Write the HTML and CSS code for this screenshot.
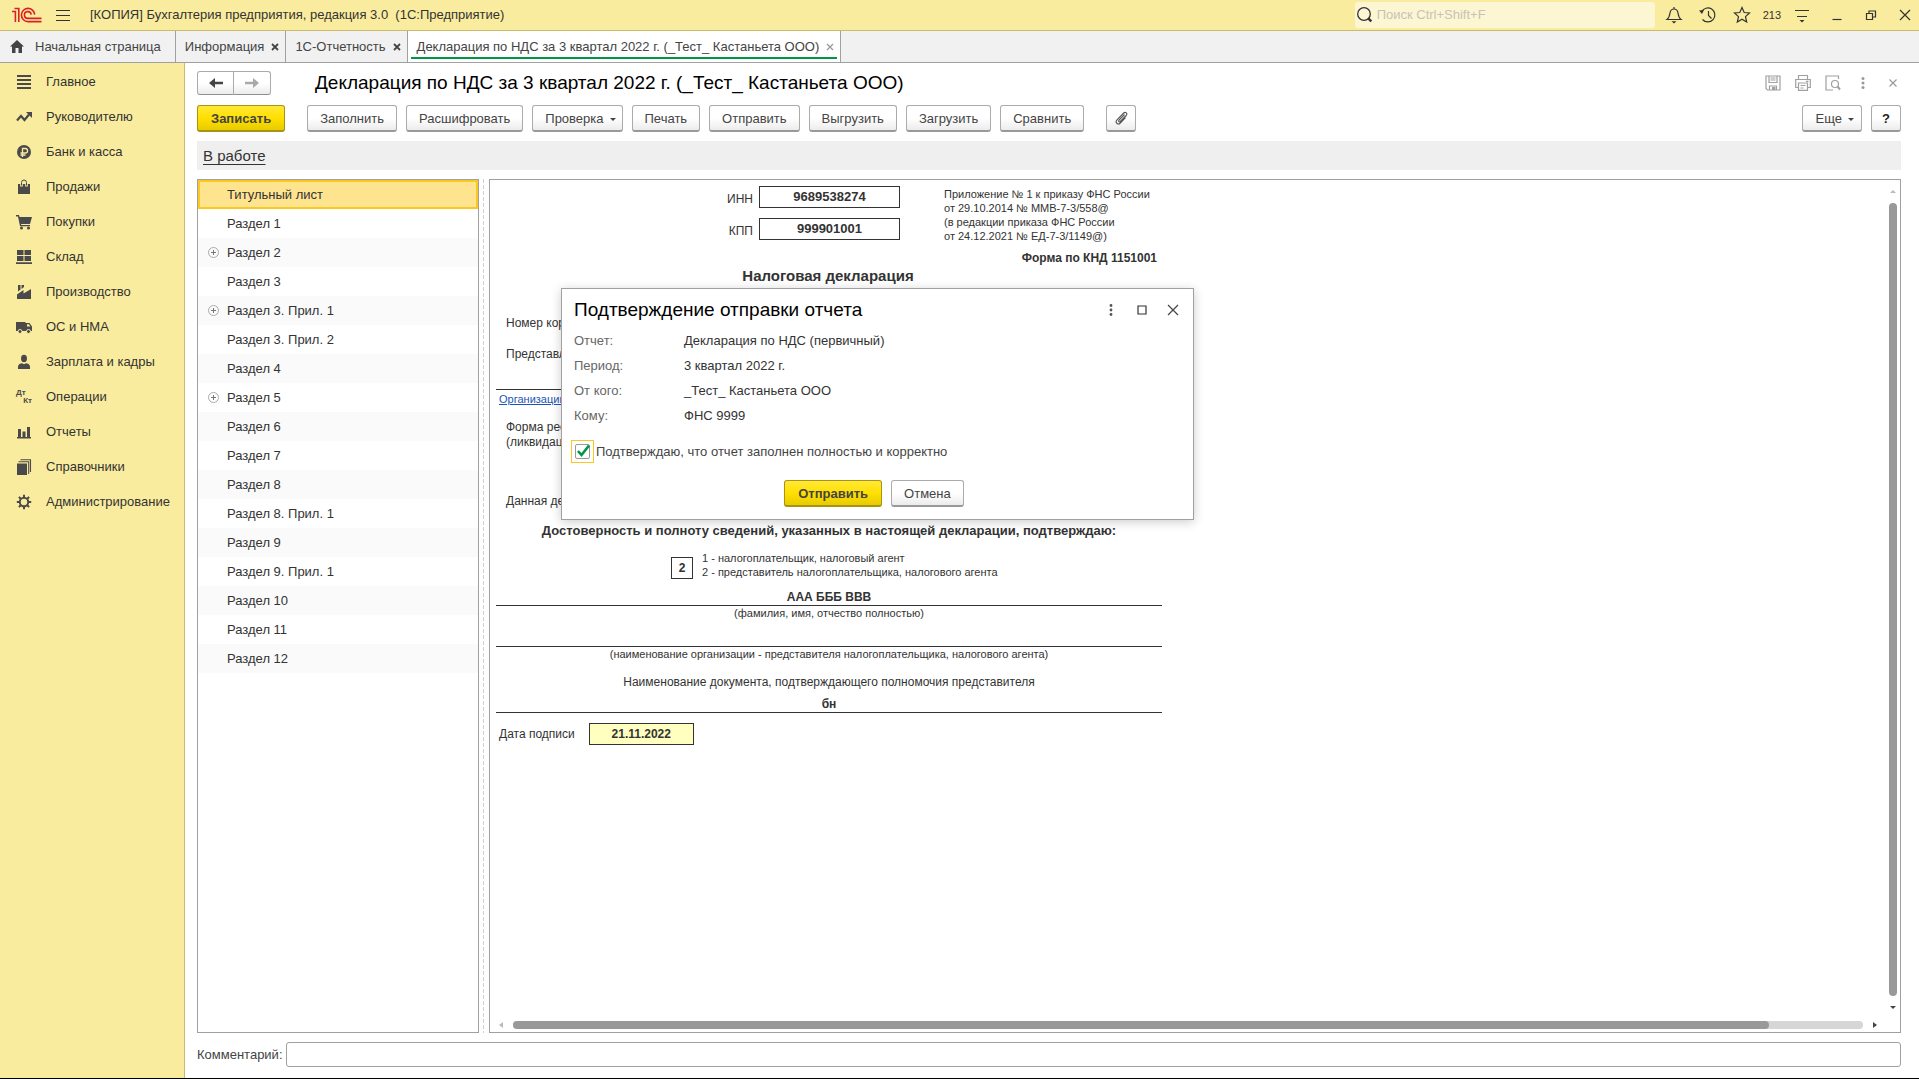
FILE: index.html
```html
<!DOCTYPE html>
<html lang="ru">
<head>
<meta charset="utf-8">
<title>[КОПИЯ] Бухгалтерия предприятия, редакция 3.0</title>
<link rel="stylesheet" href="styles.css">
</head>
<body>
<header class="titlebar">
  <svg class="logo" width="30" height="16" viewBox="0 0 30 16" fill="none" stroke="#dc1f26" stroke-width="1.6"><path d="M0 4.5H3.4V15M2.5 1.5H6.8V15M22.6 7.6A6.6 6.6 0 1 0 16 14.6H29.5M19.2 7.6A3.4 3.4 0 1 0 16 11.4H29.5"/></svg>
  <button class="icon-btn menu-btn" aria-label="Меню"><svg width="14" height="13" viewBox="0 0 14 13" stroke="#333" stroke-width="1"><path d="M0 1.5h14M0 6.5h14M0 11.5h14"/></svg></button>
  <span class="app-title">[КОПИЯ] Бухгалтерия предприятия, редакция 3.0&nbsp; (1С:Предприятие)</span>
  <label class="search">
    <svg width="18" height="18" viewBox="0 0 18 18" fill="none" stroke="#333"><circle cx="8" cy="8" r="6.3" stroke-width="1.3"/><path d="M12.3 12.3l3 3" stroke-width="2.4"/></svg>
    <input type="search" placeholder="Поиск Ctrl+Shift+F" aria-label="Поиск">
  </label>
  <div class="tools">
    <button class="icon-btn" aria-label="Уведомления"><svg width="18" height="18" viewBox="0 0 18 18" fill="none" stroke="#333" stroke-width="1.2"><path d="M2 13.5h14c-2-1.500-2.500-3-3-6.500C12.600 4.300 11 3 9 3S5.400 4.300 5 7c-.5 3.500-1 5-3 6.500zM9 1v2"/><path d="M6.500 15.300h5L9 17.500z" fill="#333" stroke="none"/></svg></button>
    <button class="icon-btn" aria-label="История"><svg width="18" height="18" viewBox="0 0 18 18" fill="none" stroke="#333" stroke-width="1.2"><path d="M2.500 6A7 7 0 1 1 3.500 13.500M9.500 5v4.500l3 3"/><path d="M0 4.500l5-.5-2 4z" fill="#333" stroke="none"/></svg></button>
    <button class="icon-btn" aria-label="Избранное"><svg width="18" height="18" viewBox="0 0 18 18" fill="none" stroke="#333" stroke-width="1.2"><path d="M9 1.500l2.200 5 5.300.5-4 3.600 1.200 5.400L9 13.200 4.300 16l1.200-5.400-4-3.600 5.300-.5z"/></svg></button>
    <span class="count">213</span>
    <button class="icon-btn" aria-label="Сервис"><svg width="18" height="18" viewBox="0 0 18 18" stroke="#333" stroke-width="1.2"><path d="M2 4.500h14M4 10.500h10"/><path d="M6.500 14h5L9 16.500z" fill="#333" stroke="none"/></svg></button>
    <button class="icon-btn win" aria-label="Свернуть"><svg width="12" height="12" viewBox="0 0 12 12" stroke="#333" stroke-width="1.2"><path d="M1.500 10.500h9"/></svg></button>
    <button class="icon-btn win" aria-label="Восстановить"><svg width="12" height="12" viewBox="0 0 12 12" fill="none" stroke="#333" stroke-width="1.2"><path d="M1.500 4.500h6v6h-6zM4 4.500v-2.500h6.500v6H7.500"/></svg></button>
    <button class="icon-btn win" aria-label="Закрыть"><svg width="12" height="12" viewBox="0 0 12 12" stroke="#333" stroke-width="1.200"><path d="M1 1l10 10M11 1L1 11"/></svg></button>
  </div>
</header>

<nav class="tabs" aria-label="Открытые окна">
  <a class="tab home" href="#"><svg width="14" height="13" viewBox="0 0 14 13" fill="#444"><path d="M7 0l7 6.500h-2V13H8.500V8h-3v5H2V6.500H0z"/></svg>Начальная страница</a>
  <a class="tab" href="#">Информация<svg width="8" height="8" viewBox="0 0 8 8" stroke="#444" stroke-width="1.800"><path d="M1 1l6 6M7 1L1 7"/></svg></a>
  <a class="tab" href="#">1С-Отчетность<svg width="8" height="8" viewBox="0 0 8 8" stroke="#444" stroke-width="1.800"><path d="M1 1l6 6M7 1L1 7"/></svg></a>
  <a class="tab active" href="#">Декларация по НДС за 3 квартал 2022 г. (_Тест_ Кастаньета ООО)<svg width="8" height="8" viewBox="0 0 8 8" stroke="#999" stroke-width="1.300"><path d="M1 1l6 6M7 1L1 7"/></svg></a>
</nav>

<div class="workspace">
  <nav class="sections" aria-label="Разделы">
    <a href="#"><svg viewBox="0 0 16 16"><path d="M1 1h14v2H1zM1 5h14v2H1zM1 9h14v2H1zM1 13h14v2H1z"/></svg>Главное</a>
    <a href="#"><svg viewBox="0 0 16 16"><path d="M1 11.500l4-4.500 3.500 4L13 5.500" fill="none" stroke="#4a4a4a" stroke-width="2.200"/><path d="M10 3h6v6z"/></svg>Руководителю</a>
    <a href="#"><svg viewBox="0 0 16 16"><circle cx="8" cy="8" r="7"/><path d="M6.500 13V4.500h2.800a2.200 2.200 0 0 1 0 4.500H4.500M4.500 11h5" fill="none" stroke="#faec9e" stroke-width="1.300"/></svg>Банк и касса</a>
    <a href="#"><svg viewBox="0 0 16 16"><path d="M2 5h12v10H2z"/><path d="M5.500 7.500V3.500a2.500 2.500 0 0 1 5 0v4" fill="none" stroke="#faec9e" stroke-width="2.600"/><path d="M5.500 6.500v-3a2.500 2.500 0 0 1 5 0v3" fill="none" stroke="#4a4a4a" stroke-width="1"/></svg>Продажи</a>
    <a href="#"><svg viewBox="0 0 16 16"><path d="M0 1h3l.6 2H16l-2 7H5l.3 1H14v1.300H4L2 2.500H0z"/><circle cx="5.500" cy="14" r="1.500"/><circle cx="12.500" cy="14" r="1.500"/></svg>Покупки</a>
    <a href="#"><svg viewBox="0 0 16 16"><path d="M1 1h6.500v5H1zM8.500 1H15v5H8.500zM1 7h6.500v5H1zM8.500 7H15v5H8.500zM0 13.200h16V15H0z"/></svg>Склад</a>
    <a href="#"><svg viewBox="0 0 16 16"><path d="M1 15v-4.500L7.500 6v3.500L15 5v10z"/><path d="M2 1h2.500v4.500L2 7.500zM5.500 1H8v2L5.500 5z"/></svg>Производство</a>
    <a href="#"><svg viewBox="0 0 16 16"><path d="M0 3h9.500v9H0zM9.500 4h4L16 7.500V12H9.500z"/><path d="M11 5.200h2l1.300 2.300H11z" fill="#faec9e"/><circle cx="4" cy="12.500" r="2" stroke="#faec9e"/><circle cx="12.500" cy="12.500" r="2" stroke="#faec9e"/></svg>ОС и НМА</a>
    <a href="#"><svg viewBox="0 0 16 16"><ellipse cx="8" cy="4.500" rx="3" ry="3.700"/><path d="M2 15v-2.500C2 10.500 4 9.500 6 9.300l2 1 2-1c2 .2 4 1.200 4 3.200V15z"/></svg>Зарплата и кадры</a>
    <a href="#"><span class="dtkt" aria-hidden="true"><b>Дт</b><b>Кт</b></span>Операции</a>
    <a href="#"><svg viewBox="0 0 16 16"><path d="M1 13h14v1.500H1zM2 5h3v8H2zM6.500 7.500h3V13h-3zM11 3h3v10h-3z"/></svg>Отчеты</a>
    <a href="#"><svg viewBox="0 0 16 16"><path d="M1 4.500h10V16H1z"/><path d="M2.500 2.800h10.200V15M4.500 .8h10V13" fill="none" stroke="#4a4a4a" stroke-width="1.100"/></svg>Справочники</a>
    <a href="#"><svg viewBox="0 0 16 16" stroke="#4a4a4a"><circle cx="8" cy="8" r="4.200" fill="#faec9e" stroke-width="2"/><path d="M8 .8v2.500M8 12.700v2.500M.8 8h2.500M12.700 8h2.500M2.900 2.900l1.800 1.800M11.300 11.300l1.800 1.800M2.900 13.100l1.800-1.800M11.300 4.700l1.800-1.800" stroke-width="2"/></svg>Администрирование</a>
  </nav>

  <main class="page">
    <div class="page-head">
      <div class="history">
        <button aria-label="Назад"><svg width="14" height="12" viewBox="0 0 14 12" fill="#444"><path d="M0 6l6-5v3.800h8v2.400H6V11z"/></svg></button>
        <button aria-label="Вперед"><svg width="14" height="12" viewBox="0 0 14 12" fill="#aaa"><path d="M14 6L8 1v3.800H0v2.400h8V11z"/></svg></button>
      </div>
      <h1>Декларация по НДС за 3 квартал 2022 г. (_Тест_ Кастаньета ООО)</h1>
      <div class="page-tools">
        <button class="icon-btn" aria-label="Сохранить"><svg width="16" height="16" viewBox="0 0 16 16" fill="none" stroke="#a0a0a0" stroke-width="1.200"><path d="M1 1h14v14H2.500L1 13.500zM4 1v6.500h8V1M5.500 3h5M5.500 5h5M4.500 15v-4h7v4"/><path d="M7 12h3.500v3H7z" fill="#a0a0a0" stroke="none"/></svg></button>
        <button class="icon-btn" aria-label="Печать"><svg width="16" height="16" viewBox="0 0 16 16" fill="none" stroke="#a0a0a0" stroke-width="1.200"><path d="M3.500 4.500v-4h9v4M3.500 12.500H.7v-8h14.600v8h-2.800M3.500 8h9v7.400h-9zM5.500 10.500h5M5.500 13h3M11 6.300h2.500"/></svg></button>
        <button class="icon-btn" aria-label="Просмотр"><svg width="16" height="16" viewBox="0 0 16 16" fill="none" stroke="#a0a0a0" stroke-width="1.200"><path d="M8 15H1V1h12.500v3"/><circle cx="10" cy="9" r="3.500"/><path d="M12.500 11.500l2.500 3" stroke-width="2"/></svg></button>
        <button class="icon-btn" aria-label="Дополнительно"><svg width="16" height="16" viewBox="0 0 16 16" fill="#999"><circle cx="8" cy="3.500" r="1.500"/><circle cx="8" cy="8" r="1.500"/><circle cx="8" cy="12.500" r="1.500"/></svg></button>
        <button class="icon-btn" aria-label="Закрыть форму"><svg width="16" height="16" viewBox="0 0 16 16" stroke="#999" stroke-width="1.200"><path d="M4.500 4.500l7 7M11.500 4.500l-7 7"/></svg></button>
      </div>
    </div>

    <div class="commands">
      <button class="btn primary save">Записать</button>
      <button class="btn">Заполнить</button>
      <button class="btn">Расшифровать</button>
      <button class="btn drop">Проверка</button>
      <button class="btn">Печать</button>
      <button class="btn">Отправить</button>
      <button class="btn">Выгрузить</button>
      <button class="btn">Загрузить</button>
      <button class="btn">Сравнить</button>
      <button class="btn clip" aria-label="Файлы"><svg width="14" height="14" viewBox="0 0 14 14" fill="none" stroke="#555" stroke-width="1.100"><path d="M10.500 3.500L5 9.200c-.9 1 .4 2.200 1.300 1.300l5.900-6c1.700-1.900-.7-4.200-2.500-2.500L3 8.800c-2.400 2.600.9 5.600 3.300 3.200L11.500 6.500"/></svg></button>
      <button class="btn drop more">Еще</button>
      <button class="btn help">?</button>
    </div>

    <div class="status"><a href="#">В работе</a></div>

    <div class="panes">
      <ul class="tree">
        <li class="selected">Титульный лист</li>
        <li>Раздел 1</li>
        <li class="group">Раздел 2</li>
        <li>Раздел 3</li>
        <li class="group">Раздел 3. Прил. 1</li>
        <li>Раздел 3. Прил. 2</li>
        <li>Раздел 4</li>
        <li class="group">Раздел 5</li>
        <li>Раздел 6</li>
        <li>Раздел 7</li>
        <li>Раздел 8</li>
        <li>Раздел 8. Прил. 1</li>
        <li>Раздел 9</li>
        <li>Раздел 9. Прил. 1</li>
        <li>Раздел 10</li>
        <li>Раздел 11</li>
        <li>Раздел 12</li>
      </ul>
      <div class="splitter"></div>
      <section class="report">
        <div class="sheet">
          <div class="sheet-head">
            <div class="codes">
              <span>ИНН</span><b class="box">9689538274</b>
              <span>КПП</span><b class="box">999901001</b>
            </div>
            <p class="small">Приложение № 1 к приказу ФНС России<br>от 29.10.2014 № ММВ-7-3/558@<br>(в редакции приказа ФНС России<br>от 24.12.2021 № ЕД-7-3/1149@)</p>
          </div>
          <p class="knd">Форма по КНД 1151001</p>
          <h2>Налоговая декларация</h2>
          <div class="covered">
            <p>Номер кор.</p>
            <p class="office">Представл.</p>
            <p class="org small"><a href="#">Организации</a></p>
            <p class="reorg">Форма реорг.<br>(ликвидац.)</p>
            <p class="given">Данная декл.</p>
          </div>
          <h3>Достоверность и полноту сведений, указанных в настоящей декларации, подтверждаю:</h3>
          <div class="signer">
            <b class="box">2</b>
            <p class="small">1 - налогоплательщик, налоговый агент<br>2 - представитель налогоплательщика, налогового агента</p>
          </div>
          <p class="line">ААА БББ ВВВ</p>
          <p class="note small">(фамилия, имя, отчество полностью)</p>
          <p class="line"></p>
          <p class="note small">(наименование организации - представителя налогоплательщика, налогового агента)</p>
          <p class="doc-name">Наименование документа, подтверждающего полномочия представителя</p>
          <p class="line">бн</p>
          <div class="date"><span>Дата подписи</span><b class="box filled">21.11.2022</b></div>
        </div>
        <div class="vscroll"><i class="arrow up"></i><i class="thumb"></i><i class="arrow down"></i></div>
        <div class="hscroll"><i class="arrow left"></i><div class="track"><i class="thumb"></i></div><i class="arrow right"></i></div>
      </section>
    </div>

    <label class="comment">Комментарий:<input type="text"></label>

    <div class="dialog" role="dialog" aria-labelledby="dialog-title">
      <div class="dialog-head">
        <h2 id="dialog-title">Подтверждение отправки отчета</h2>
        <button class="icon-btn" aria-label="Меню окна"><svg width="16" height="16" viewBox="0 0 16 16" fill="#555"><circle cx="8" cy="3.500" r="1.400"/><circle cx="8" cy="8" r="1.400"/><circle cx="8" cy="12.500" r="1.400"/></svg></button>
        <button class="icon-btn" aria-label="Развернуть"><svg width="16" height="16" viewBox="0 0 16 16" fill="none" stroke="#333" stroke-width="1.200"><path d="M4 4h8v8H4z"/></svg></button>
        <button class="icon-btn" aria-label="Закрыть окно"><svg width="16" height="16" viewBox="0 0 16 16" stroke="#444" stroke-width="1.200"><path d="M3 3l10 10M13 3L3 13"/></svg></button>
      </div>
      <dl>
        <dt>Отчет:</dt><dd>Декларация по НДС (первичный)</dd>
        <dt>Период:</dt><dd>3 квартал 2022 г.</dd>
        <dt>От кого:</dt><dd>_Тест_ Кастаньета ООО</dd>
        <dt>Кому:</dt><dd>ФНС 9999</dd>
      </dl>
      <label class="confirm">
        <span class="focus"><input type="checkbox" checked><svg width="16" height="16" viewBox="0 0 16 16" fill="none" stroke="#009646" stroke-width="2.600"><path d="M3 7l3.500 4L14 1.500"/></svg></span>
        Подтверждаю, что отчет заполнен полностью и корректно
      </label>
      <div class="dialog-actions">
        <button class="btn primary">Отправить</button>
        <button class="btn">Отмена</button>
      </div>
    </div>
  </main>
</div>
</body>
</html>
```
FILE: styles.css
```css
* { box-sizing: border-box; }
body {
  margin: 0;
  min-height: 100vh;
  display: flex;
  flex-direction: column;
  border-bottom: 1px solid #000;
  background: #fff;
  color: #333;
  font: 13px/16px "Liberation Sans", Arial, sans-serif;
}
p, h1, h2, h3, ul, dl, dd { margin: 0; padding: 0; }
button, input { font: inherit; color: inherit; }
svg { display: block; flex: none; }
a { color: inherit; }

.icon-btn {
  display: flex;
  padding: 0;
  border: 0;
  background: none;
}

/* Title bar */
.titlebar {
  display: flex;
  align-items: center;
  height: 31px;
  padding: 0 5px 0 12px;
  background: #faec9e;
  border-bottom: 1px solid #c9bb6c;
}
.menu-btn { margin: 0 20px 0 14px; }
.search {
  display: flex;
  align-items: center;
  gap: 3px;
  width: 300px;
  height: 26px;
  margin-left: auto;
  padding-left: 1px;
  border-radius: 3px;
  background: #fdf6d3;
}
.search input {
  flex: 1;
  min-width: 0;
  padding: 0;
  border: 0;
  outline: 0;
  background: none;
}
.search input::placeholder { color: #c6c3b8; opacity: 1; }
.tools { display: flex; align-items: center; gap: 16px; margin-left: 10px; }
.count { margin: 0 -4px; font-size: 11px; }
.win { margin: 0 3px 0 4px; }
.win + .win { margin-left: 3px; }

/* Window tabs */
.tabs {
  display: flex;
  height: 32px;
  background: #f1f1f1;
  border-bottom: 1px solid #a0a0a0;
}
.tab {
  display: flex;
  align-items: center;
  gap: 7px;
  padding: 0 6px 0 9px;
  border-right: 1px solid #a0a0a0;
  color: #444;
  text-decoration: none;
}
.tab.home { gap: 11px; padding: 0 14px 0 10px; }
.tab.active {
  background:
    linear-gradient(#009646, #009646) center 26px / calc(100% - 6px) 2px no-repeat,
    #fff;
}

/* Section panel */
.workspace { flex: 1; display: flex; }
.sections {
  flex: none;
  width: 185px;
  padding-top: 1px;
  background: #faec9e;
  border-right: 1px solid #c9bb6c;
}
.sections a {
  display: flex;
  align-items: center;
  gap: 14px;
  height: 35px;
  padding-left: 16px;
  color: #333;
  text-decoration: none;
}
.sections svg { width: 16px; height: 16px; fill: #4a4a4a; }
.dtkt { width: 16px; font-size: 8px; line-height: 8px; color: #4a4a4a; }
.dtkt b { display: block; }
.dtkt b + b { text-align: right; }

/* Form */
.page {
  position: relative;
  flex: 1;
  min-width: 0;
  display: flex;
  flex-direction: column;
  padding: 8px 18px 11px 12px;
}
.page-head { display: flex; align-items: center; height: 24px; }
.history { display: flex; }
.history button {
  display: flex;
  align-items: center;
  justify-content: center;
  width: 37px;
  height: 24px;
  padding: 0;
  border: 1px solid #ababab;
  border-bottom-color: #8f8f8f;
  border-radius: 3px 0 0 3px;
  background: linear-gradient(#fff 50%, #ececec);
}
.history button + button { border-left: 0; border-radius: 0 3px 3px 0; }
h1 {
  margin-left: 44px;
  font-size: 19px;
  line-height: 26px;
  font-weight: 400;
  color: #000;
}
.page-tools { display: flex; gap: 14px; margin-left: auto; }

.commands { display: flex; gap: 9px; margin-top: 10px; }
.btn {
  height: 27px;
  padding: 1px 12px 0;
  border: 1px solid #ababab;
  border-bottom: 2px solid #999;
  border-radius: 3px;
  background: linear-gradient(#fff 50%, #ececec);
  color: #444;
  white-space: nowrap;
}
.btn.primary {
  padding: 1px 13px 0;
  border-color: #a89414;
  background: linear-gradient(#ffe838, #ffe000 50%, #e8cb00);
  font-weight: 700;
}
.btn.save { margin-right: 13px; }
.btn.drop::after {
  content: "";
  display: inline-block;
  margin: 0 -6px 2px 6px;
  border: 3px solid transparent;
  border-top-color: #444;
  border-bottom: 0;
}
.btn.clip { width: 30px; margin-left: 13px; padding: 0 7px; }
.btn.more { margin-left: auto; padding: 1px 13px 0; }
.btn.help { width: 30px; padding: 1px 0 0; font-weight: 700; color: #222; }

.status {
  height: 29px;
  margin-top: 9px;
  padding-left: 6px;
  background: #efefef;
  font-size: 15px;
  line-height: 29px;
}
.status a { text-underline-offset: 3px; }

.panes { flex: 1; display: flex; margin-top: 9px; }
.tree {
  width: 282px;
  border: 1px solid #a0a0a0;
  list-style: none;
}
.tree li {
  position: relative;
  height: 29px;
  padding-left: 29px;
  line-height: 29px;
}
.tree li:nth-child(odd) { background: #fafafa; }
.tree li.selected {
  padding-left: 27px;
  border: 2px solid #fac81e;
  background: #ffe48f;
  line-height: 26px;
}
.tree .group::before {
  content: "";
  position: absolute;
  left: 10px;
  top: 9px;
  width: 9px;
  height: 9px;
  border: 1px solid #aaa;
  border-radius: 50%;
  background:
    linear-gradient(#777, #777) center / 5px 1px no-repeat,
    linear-gradient(#777, #777) center / 1px 5px no-repeat;
}
.splitter {
  width: 1px;
  margin: 0 5px 0 4px;
  background: repeating-linear-gradient(#d0d0d0 0 4px, transparent 4px 6px);
}

/* Report sheet with its scrollbars */
.report {
  flex: 1;
  min-width: 0;
  display: grid;
  grid-template: 1fr 15px / 1fr 11px;
  border: 1px solid #a0a0a0;
}
.sheet {
  width: 672px;
  padding: 6px 0 0 6px;
  font-size: 12px;
}
.small { font-size: 11px; line-height: 14px; }
.box {
  display: block;
  border: 1px solid #333;
  line-height: 20px;
  text-align: center;
}
.sheet-head { display: flex; justify-content: space-between; height: 64px; padding-left: 228px; }
.codes {
  display: grid;
  grid-template-columns: 29px 141px;
  align-content: start;
  gap: 10px 6px;
  text-align: right;
}
.codes span { height: 22px; line-height: 26px; }
.codes .box { height: 22px; font-size: 13px; }
.sheet-head p { width: 218px; padding-top: 1px; }
.knd { padding-right: 5px; font-weight: 700; text-align: right; }
.sheet h2 { padding-right: 2px; font-size: 15px; line-height: 20px; text-align: center; }

/* Part of the sheet that stays under the confirmation window */
.covered { height: 237px; padding-top: 29px; }
.covered p { padding-left: 10px; }
.office { height: 44px; margin-top: 15px; border-bottom: 1px solid #333; }
.covered .org { width: 65px; margin-top: 2px; padding-left: 3px; overflow: hidden; }
.org a { color: #1a55b8; }
.reorg, .given { width: 65px; overflow: hidden; white-space: nowrap; }
.reorg { margin-top: 14px; line-height: 15px; }
.given { margin-top: 43px; }

.sheet h3 { font-size: 13px; line-height: 16px; text-align: center; }
.signer { display: flex; align-items: end; gap: 9px; margin-top: 12px; padding-left: 175px; }
.signer .box { width: 22px; height: 22px; }
.line {
  height: 16px;
  margin-top: 11px;
  border-bottom: 1px solid #333;
  font-weight: 700;
  line-height: 15px;
  text-align: center;
}
.note { text-align: center; }
.doc-name { margin-top: 13px; text-align: center; }
.doc-name + .line { margin-top: 7px; }
.date { display: flex; align-items: center; gap: 14px; margin-top: 10px; padding-left: 3px; }
.date .box { width: 105px; height: 22px; }
.filled { background: #ffffc0; }

.thumb { display: block; border-radius: 4px; background: #999; }
.arrow { flex: none; width: 0; height: 0; border: 3px solid transparent; }
.up { border-bottom-color: #bbb; border-top: 0; }
.down { border-top-color: #444; border-bottom: 0; }
.left { border-right: 4px solid #bbb; border-left: 0; }
.right { border-left: 4px solid #444; border-right: 0; }
.vscroll {
  display: flex;
  flex-direction: column;
  align-items: center;
  width: 8px;
  gap: 10px;
  padding: 10px 0 8px;
}
.vscroll .thumb { flex: 1; width: 8px; }
.hscroll {
  grid-column: 1 / -1;
  display: flex;
  align-items: center;
  gap: 10px;
  padding: 0 23px 0 9px;
}
.track { flex: 1; height: 8px; border-radius: 4px; background: #d6d6d6; }
.track .thumb { width: 93%; height: 8px; }

.comment { display: flex; align-items: center; gap: 3px; margin-top: 9px; color: #444; }
.comment input {
  flex: 1;
  height: 25px;
  padding: 0 6px;
  border: 1px solid #a0a0a0;
  border-radius: 3px;
}

/* Confirmation window floats over the report */
.dialog {
  position: absolute;
  left: 376px;
  top: 225px;
  width: 633px;
  padding: 0 9px 12px 12px;
  border: 1px solid #a0a0a0;
  background: #fff;
  box-shadow: 0 2px 10px rgba(0, 0, 0, .2);
}
.dialog-head { display: flex; align-items: center; gap: 15px; height: 39px; padding: 2px 3px 0 0; }
.dialog-head h2 {
  flex: 1;
  font-size: 19px;
  line-height: 24px;
  font-weight: 400;
  color: #000;
}
.dialog dl { display: grid; grid-template-columns: 110px 1fr; line-height: 25px; }
.dialog dt { color: #666; }
.confirm { display: flex; align-items: center; gap: 2px; margin: 12px 0 0 -3px; color: #444; }
.focus {
  display: grid;
  width: 23px;
  height: 23px;
  border: 1px solid #fac81e;
  place-items: center;
}
.focus > * { grid-area: 1 / 1; }
.focus input {
  appearance: none;
  width: 15px;
  height: 15px;
  margin: 0;
  border: 1px solid #999;
  border-radius: 2px;
}
.dialog-actions { display: flex; justify-content: center; gap: 9px; margin-top: 17px; padding-right: 10px; }
```
